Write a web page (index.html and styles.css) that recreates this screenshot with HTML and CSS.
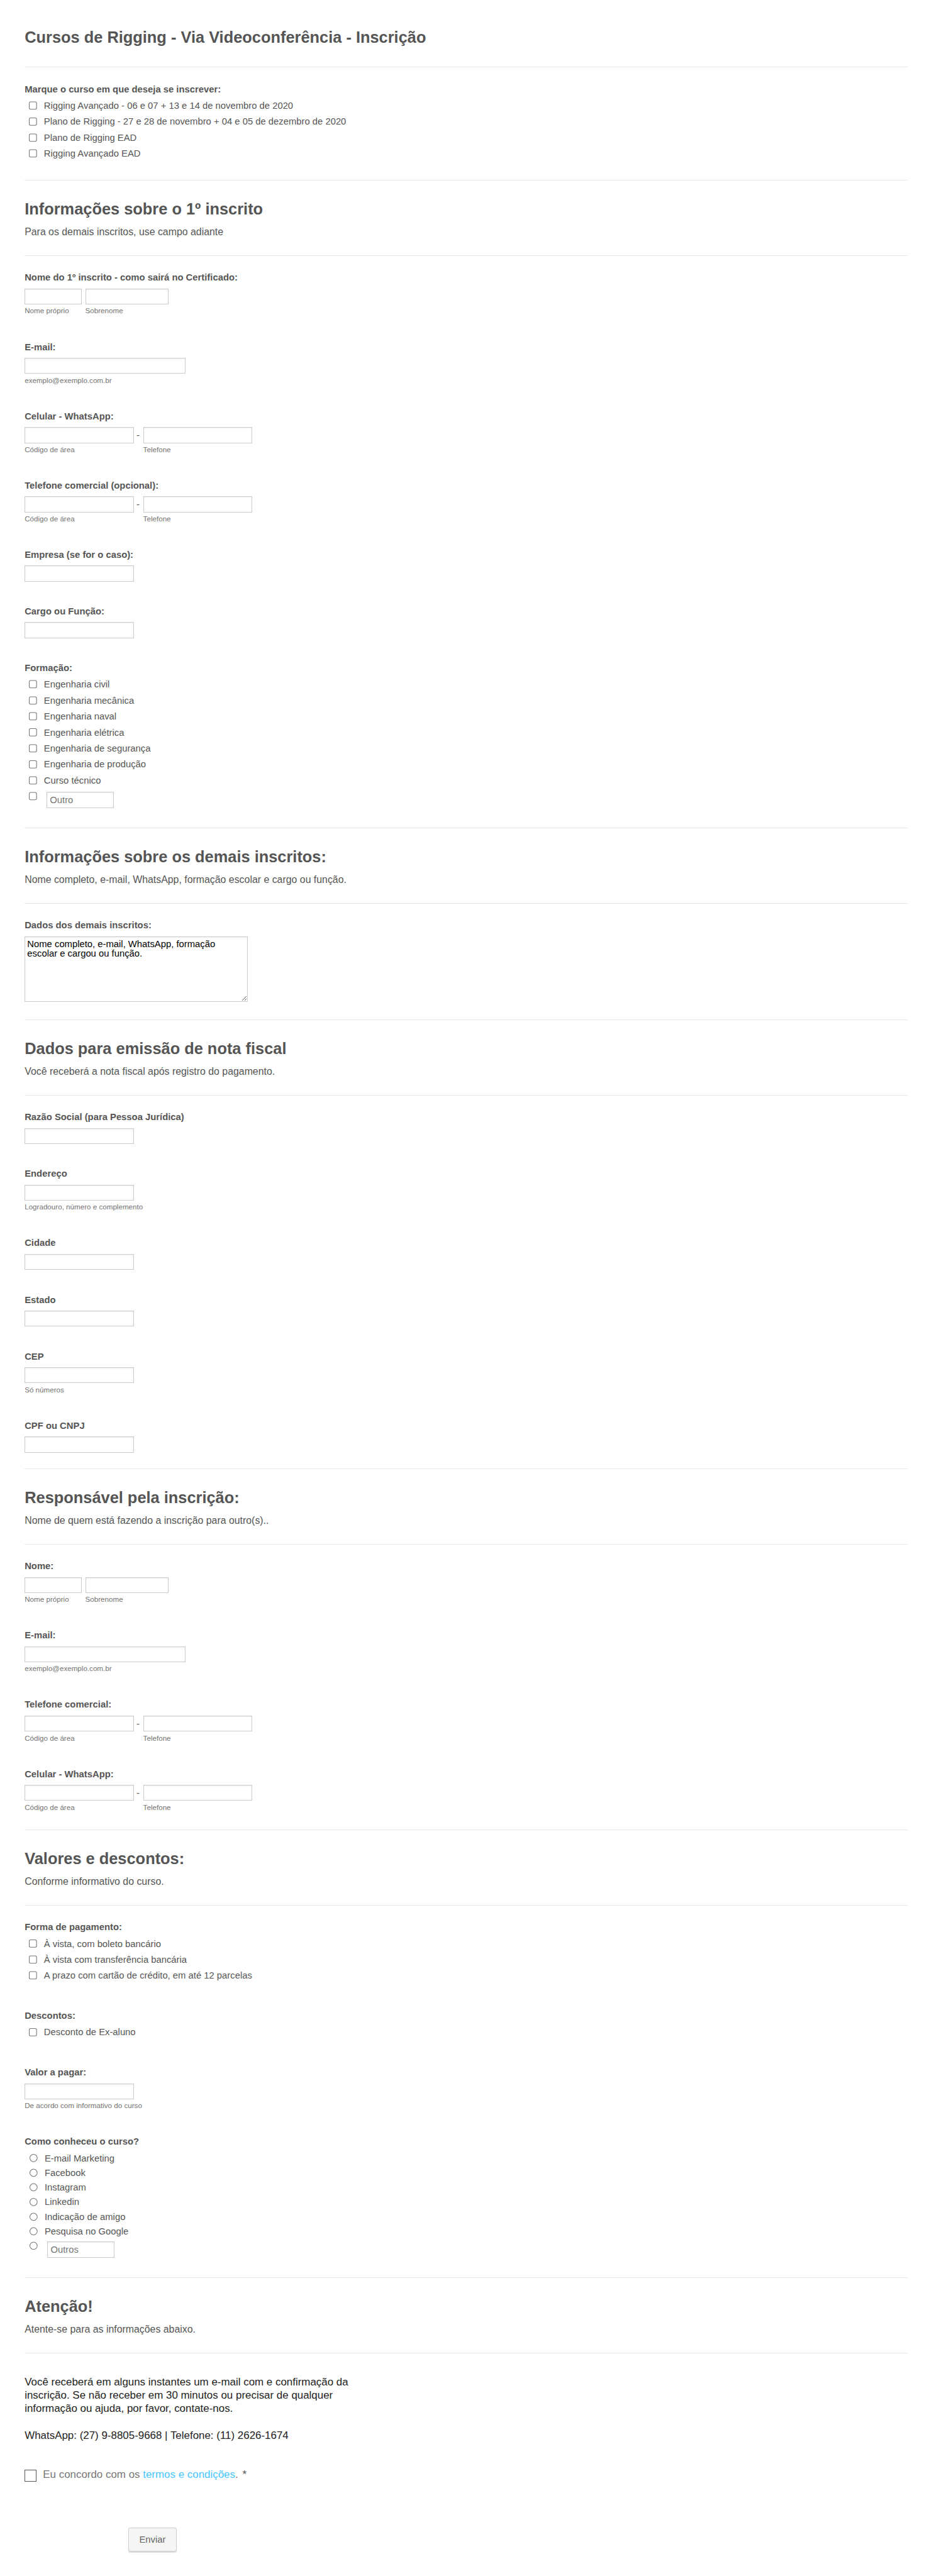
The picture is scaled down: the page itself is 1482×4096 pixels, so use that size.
FILE: index.html
```html
<!DOCTYPE html>
<html lang="pt">
<head>
    <meta charset="UTF-8">
    <meta name="viewport" content="width=device-width, initial-scale=1.0">
    <title>Cursos de Rigging - Via Videoconferência - Inscrição</title>
    <link rel="stylesheet" href="styles.css">
</head>
<body>
    <form class="form">
        <div class="page-title">
            <h1>Cursos de Rigging - Via Videoconferência - Inscrição</h1>
        </div>

        <div class="section">
            <div class="field">
                <div class="label">Marque o curso em que deseja se inscrever:</div>
                <div class="options">
                    <label class="option"><input type="checkbox">Rigging Avançado - 06 e 07 + 13 e 14 de novembro de 2020</label>
                    <label class="option"><input type="checkbox">Plano de Rigging - 27 e 28 de novembro + 04 e 05 de dezembro de 2020</label>
                    <label class="option"><input type="checkbox">Plano de Rigging EAD</label>
                    <label class="option"><input type="checkbox">Rigging Avançado EAD</label>
                </div>
            </div>
        </div>

        <div class="header">
            <h2>Informações sobre o 1º inscrito</h2>
            <p>Para os demais inscritos, use campo adiante</p>
        </div>

        <div class="section">
            <div class="field">
                <div class="label">Nome do 1º inscrito - como sairá no Certificado:</div>
                <div class="row">
                    <div class="first"><input type="text" class="text"><div class="sub">Nome próprio</div></div>
                    <div class="last"><input type="text" class="text"><div class="sub">Sobrenome</div></div>
                </div>
            </div>
            <div class="field">
                <div class="label">E-mail:</div>
                <div class="email"><input type="text" class="text"><div class="sub">exemplo@exemplo.com.br</div></div>
            </div>
            <div class="field">
                <div class="label">Celular - WhatsApp:</div>
                <div class="row phone">
                    <div class="std"><input type="text" class="text"><div class="sub">Código de área</div></div>
                    <span class="dash">-</span>
                    <div class="std"><input type="text" class="text"><div class="sub">Telefone</div></div>
                </div>
            </div>
            <div class="field">
                <div class="label">Telefone comercial (opcional):</div>
                <div class="row phone">
                    <div class="std"><input type="text" class="text"><div class="sub">Código de área</div></div>
                    <span class="dash">-</span>
                    <div class="std"><input type="text" class="text"><div class="sub">Telefone</div></div>
                </div>
            </div>
            <div class="field">
                <div class="label">Empresa (se for o caso):</div>
                <div class="std"><input type="text" class="text"></div>
            </div>
            <div class="field">
                <div class="label">Cargo ou Função:</div>
                <div class="std"><input type="text" class="text"></div>
            </div>
            <div class="field">
                <div class="label">Formação:</div>
                <div class="options">
                    <label class="option"><input type="checkbox">Engenharia civil</label>
                    <label class="option"><input type="checkbox">Engenharia mecânica</label>
                    <label class="option"><input type="checkbox">Engenharia naval</label>
                    <label class="option"><input type="checkbox">Engenharia elétrica</label>
                    <label class="option"><input type="checkbox">Engenharia de segurança</label>
                    <label class="option"><input type="checkbox">Engenharia de produção</label>
                    <label class="option"><input type="checkbox">Curso técnico</label>
                    <div class="other"><input type="checkbox"><input type="text" class="text" placeholder="Outro"></div>
                </div>
            </div>
        </div>

        <div class="header">
            <h2>Informações sobre os demais inscritos:</h2>
            <p>Nome completo, e-mail, WhatsApp, formação escolar e cargo ou função.</p>
        </div>

        <div class="section">
            <div class="field">
                <div class="label">Dados dos demais inscritos:</div>
                <textarea class="text area">Nome completo, e-mail, WhatsApp, formação escolar e cargou ou função.</textarea>
            </div>
        </div>

        <div class="header">
            <h2>Dados para emissão de nota fiscal</h2>
            <p>Você receberá a nota fiscal após registro do pagamento.</p>
        </div>

        <div class="section">
            <div class="field">
                <div class="label">Razão Social (para Pessoa Jurídica)</div>
                <div class="std"><input type="text" class="text"></div>
            </div>
            <div class="field">
                <div class="label">Endereço</div>
                <div class="std"><input type="text" class="text"><div class="sub">Logradouro, número e complemento</div></div>
            </div>
            <div class="field">
                <div class="label">Cidade</div>
                <div class="std"><input type="text" class="text"></div>
            </div>
            <div class="field">
                <div class="label">Estado</div>
                <div class="std"><input type="text" class="text"></div>
            </div>
            <div class="field">
                <div class="label">CEP</div>
                <div class="std"><input type="text" class="text"><div class="sub">Só números</div></div>
            </div>
            <div class="field">
                <div class="label">CPF ou CNPJ</div>
                <div class="std"><input type="text" class="text"></div>
            </div>
        </div>

        <div class="header">
            <h2>Responsável pela inscrição:</h2>
            <p>Nome de quem está fazendo a inscrição para outro(s)..</p>
        </div>

        <div class="section">
            <div class="field">
                <div class="label">Nome:</div>
                <div class="row">
                    <div class="first"><input type="text" class="text"><div class="sub">Nome próprio</div></div>
                    <div class="last"><input type="text" class="text"><div class="sub">Sobrenome</div></div>
                </div>
            </div>
            <div class="field">
                <div class="label">E-mail:</div>
                <div class="email"><input type="text" class="text"><div class="sub">exemplo@exemplo.com.br</div></div>
            </div>
            <div class="field">
                <div class="label">Telefone comercial:</div>
                <div class="row phone">
                    <div class="std"><input type="text" class="text"><div class="sub">Código de área</div></div>
                    <span class="dash">-</span>
                    <div class="std"><input type="text" class="text"><div class="sub">Telefone</div></div>
                </div>
            </div>
            <div class="field">
                <div class="label">Celular - WhatsApp:</div>
                <div class="row phone">
                    <div class="std"><input type="text" class="text"><div class="sub">Código de área</div></div>
                    <span class="dash">-</span>
                    <div class="std"><input type="text" class="text"><div class="sub">Telefone</div></div>
                </div>
            </div>
        </div>

        <div class="header">
            <h2>Valores e descontos:</h2>
            <p>Conforme informativo do curso.</p>
        </div>

        <div class="section">
            <div class="field">
                <div class="label">Forma de pagamento:</div>
                <div class="options">
                    <label class="option"><input type="checkbox">À vista, com boleto bancário</label>
                    <label class="option"><input type="checkbox">À vista com transferência bancária</label>
                    <label class="option"><input type="checkbox">A prazo com cartão de crédito, em até 12 parcelas</label>
                </div>
            </div>
            <div class="field">
                <div class="label">Descontos:</div>
                <div class="options">
                    <label class="option"><input type="checkbox">Desconto de Ex-aluno</label>
                </div>
            </div>
            <div class="field">
                <div class="label">Valor a pagar:</div>
                <div class="std"><input type="text" class="text"><div class="sub">De acordo com informativo do curso</div></div>
            </div>
            <div class="field">
                <div class="label">Como conheceu o curso?</div>
                <div class="options radios">
                    <label class="option"><input type="radio" name="origem">E-mail Marketing</label>
                    <label class="option"><input type="radio" name="origem">Facebook</label>
                    <label class="option"><input type="radio" name="origem">Instagram</label>
                    <label class="option"><input type="radio" name="origem">Linkedin</label>
                    <label class="option"><input type="radio" name="origem">Indicação de amigo</label>
                    <label class="option"><input type="radio" name="origem">Pesquisa no Google</label>
                    <div class="other"><input type="radio" name="origem"><input type="text" class="text" placeholder="Outros"></div>
                </div>
            </div>
        </div>

        <div class="header">
            <h2>Atenção!</h2>
            <p>Atente-se para as informações abaixo.</p>
        </div>

        <div class="notice">
            <p>Você receberá em alguns instantes um e-mail com e confirmação da<br>inscrição. Se não receber em 30 minutos ou precisar de qualquer<br>informação ou ajuda, por favor, contate-nos.</p>
            <p>WhatsApp: (27) 9-8805-9668 | Telefone: (11) 2626-1674</p>
        </div>

        <label class="terms">
            <input type="checkbox">
            <span>Eu concordo com os <a href="#">termos e condições</a>. <span class="star">*</span></span>
        </label>

        <div class="submit">
            <button type="button">Enviar</button>
        </div>
    </form>
</body>
</html>
```

FILE: styles.css
```css
* {
    box-sizing: border-box;
}
html {
    zoom: 1.0587;
}
body {
    margin: 0;
    background: #fff;
    color: #555;
    font-family: "Liberation Sans", Arial, Helvetica, sans-serif;
    font-size: 14px;
    overflow: hidden;
}
.form {
    padding: 0 37px;
    height: 3868px;
}
h1, h2, p {
    margin: 0;
}
h1, h2 {
    font-size: 24px;
    line-height: 28px;
    font-weight: bold;
}

/* headings */
.page-title {
    padding: 42.2px 0 30.2px;
    border-bottom: 1px solid #e6e6e6;
}
.header {
    padding: 29.4px 0 26.4px;
    border-top: 1px solid #e6e6e6;
    border-bottom: 1px solid #e6e6e6;
}
.header p {
    margin-top: 12.4px;
    font-size: 15px;
    line-height: 16px;
}

/* fields */
.section {
    padding-top: 12px;
}
.field {
    padding: 12px 0;
    margin-bottom: 12.05px;
}
.label {
    line-height: 17px;
    font-weight: bold;
    margin-bottom: 8px;
}
.text {
    display: block;
    width: 100%;
    height: 24px;
    margin: 0;
    padding: 2px 4px;
    border: 1px solid #ccc;
    border-radius: 0;
    background: #fff;
    box-shadow: inset 0 1px 2px #eee;
    font-family: inherit;
    font-size: 14px;
}
.area {
    width: 335px;
    height: 98px;
    padding: 4px 3px;
    color: #000;
    line-height: 14.5px;
    margin-bottom: 3px;
}
.sub {
    margin: 3px 0 2px;
    font-size: 11px;
    line-height: 14px;
    color: #737373;
    white-space: nowrap;
}
.row {
    display: flex;
    gap: 5px;
}
.phone {
    gap: 0;
}
.first {
    width: 86px;
}
.last {
    width: 125px;
}
.email {
    width: 242px;
}
.std {
    width: 164px;
}
.dash {
    width: 14px;
    line-height: 25px;
    padding-left: 4px;
}

/* checkbox and radio lists */
.options {
    margin-top: -3.65px;
    padding: 0 0 3.65px 6px;
}
.option {
    display: flex;
    align-items: center;
    height: 24px;
}
.option input,
.other input[type="checkbox"],
.other input[type="radio"] {
    width: 13px;
    height: 13px;
    margin: 0 10px 0 0;
    flex: none;
}
.other {
    display: flex;
    align-items: flex-start;
    padding: 5.5px 0 2px;
}
.other .text {
    width: 101px;
    margin-left: 4px;
}
.radios {
    margin-top: -2.65px;
    padding-left: 7px;
}
.radios .option {
    height: 22px;
}
.radios .other {
    padding-top: 4.5px;
}

/* footer */
.notice {
    padding-top: 33.2px;
    color: #222;
    font-size: 16px;
    line-height: 20px;
}
.notice p + p {
    margin-top: 20px;
}
.terms {
    display: flex;
    gap: 9.5px;
    margin-top: 41.4px;
    color: #777;
    font-size: 16px;
    line-height: 15px;
}
.terms input {
    appearance: none;
    width: 18px;
    height: 18px;
    margin: 0;
    border: 1px solid #555;
    background: #fff;
}
.terms a {
    color: #46c6ff;
    text-decoration: none;
}
.star {
    color: #555;
    margin-left: 2px;
}
.submit {
    padding: 69px 0 0 156px;
}
.submit button {
    width: 72px;
    height: 36px;
    border: 1px solid #ccc;
    border-radius: 3px;
    background: #f5f5f5;
    box-shadow: 0 1px 1px #ddd;
    color: #666;
    font-family: inherit;
    font-size: 14px;
}
```
